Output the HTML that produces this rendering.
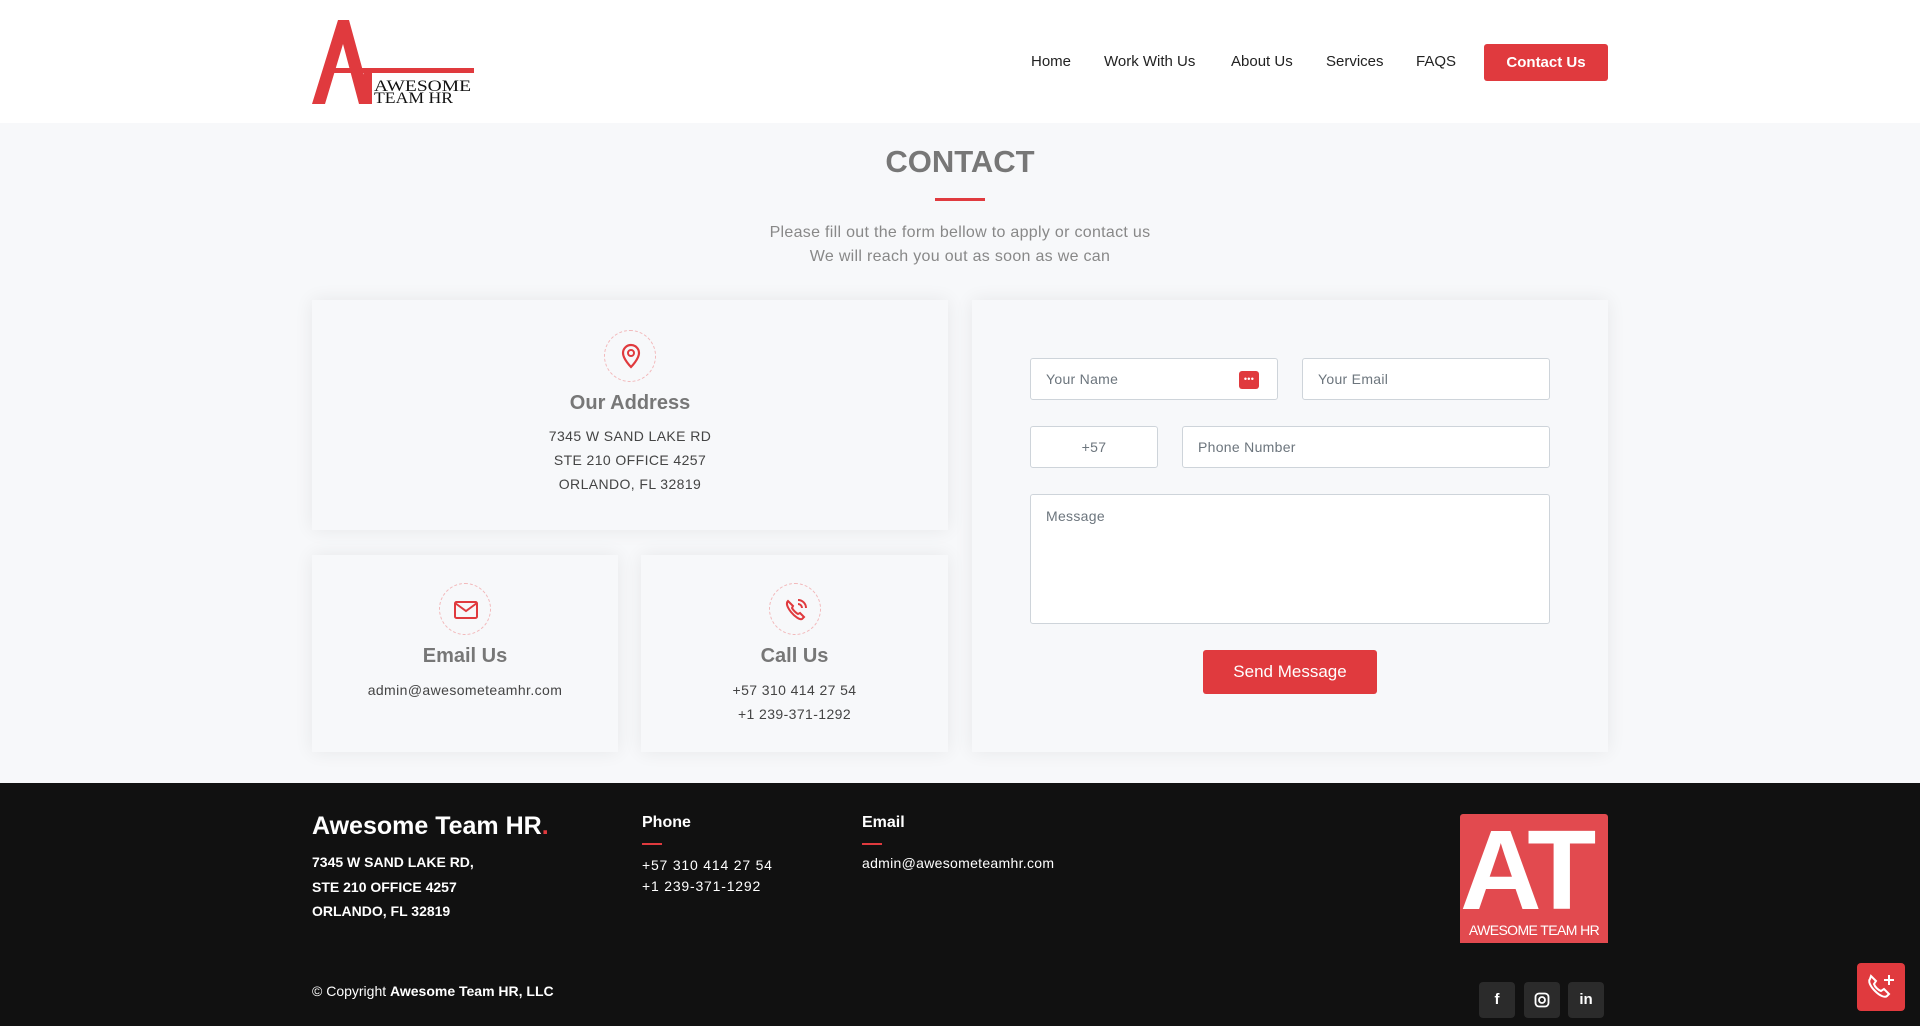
<!DOCTYPE html>
<html><head><meta charset="utf-8"><style>
*{box-sizing:border-box;margin:0;padding:0}
body{width:1920px;height:1026px;overflow:hidden;background:#f7f8fa;font-family:"Liberation Sans",sans-serif;position:relative;color:#444}
.abs{position:absolute}
header{position:absolute;left:0;top:0;width:1920px;height:123px;background:#fff}
.nav a{position:absolute;top:53px;font-size:15px;color:#222;text-decoration:none}
.cbtn{position:absolute;left:1484px;top:44px;width:124px;height:37px;background:#e03a3e;color:#fff;font-weight:bold;font-size:15px;border-radius:3px;text-align:center;line-height:37px}
h1{position:absolute;left:0;width:1920px;top:144px;text-align:center;font-size:31px;color:#777;font-weight:bold}
.sub{position:absolute;left:0;width:1920px;text-align:center;font-size:16px;color:#888;letter-spacing:.3px}
.card{position:absolute;background:#f7f8fa;box-shadow:0 0 18px rgba(0,0,0,.07);text-align:center}
.ic{position:absolute;width:52px;height:52px;border:1px dashed #f2b8ba;border-radius:50%;left:50%;margin-left:-26px}
.ct{position:absolute;width:100%;font-size:20px;font-weight:bold;color:#777}
.cl{position:absolute;width:100%;font-size:14px;color:#444;letter-spacing:.4px}
.inp{position:absolute;background:#fff;border:1px solid #ced4da;border-radius:3px;font-size:14px;color:#6c757d;padding-left:15px;line-height:40px;letter-spacing:.3px;text-align:left}
footer{position:absolute;left:0;top:783px;width:1920px;height:243px;background:#111}
.fw{color:#fff;position:absolute}
.soc{position:absolute;top:982px;width:36px;height:36px;background:#2b2b2b;border-radius:4px;color:#fff;font-weight:bold;font-size:15px;text-align:center;line-height:36px}
</style></head><body>
<header>
<svg class="abs" style="left:312px;top:20px" width="162" height="86" viewBox="0 0 162 86">
<polygon points="26,0 37,0 60,84 47,84 31,24 13,84 0,84" fill="#e03a3e"/>
<rect x="14" y="48" width="148" height="5" fill="#e03a3e"/>
<rect x="52" y="53" width="8" height="31" fill="#e03a3e"/>
<text x="62" y="71" font-family="Liberation Serif,serif" font-size="16" fill="#111" textLength="97" lengthAdjust="spacingAndGlyphs">AWESOME</text>
<text x="62" y="83" font-family="Liberation Serif,serif" font-size="16" fill="#111" textLength="79" lengthAdjust="spacingAndGlyphs">TEAM HR</text>
</svg>
<div class="nav"><a style="left:1031px">Home</a><a style="left:1104px">Work With Us</a><a style="left:1231px">About Us</a><a style="left:1326px">Services</a><a style="left:1416px">FAQS</a></div>
<div class="cbtn">Contact Us</div>
</header>
<h1>CONTACT</h1>
<div class="abs" style="left:935px;top:198px;width:50px;height:3px;background:#e03a3e"></div>
<div class="sub" style="top:224px">Please fill out the form bellow to apply or contact us</div>
<div class="sub" style="top:248px">We will reach you out as soon as we can</div>

<div class="card" style="left:312px;top:300px;width:636px;height:230px">
<div class="ic" style="top:30px"><svg width="52" height="52" viewBox="0 0 52 52"><path d="M26 14a8 8 0 0 0-8 8c0 6 8 14 8 14s8-8 8-14a8 8 0 0 0-8-8z" fill="none" stroke="#e03a3e" stroke-width="2.2"/><circle cx="26" cy="22" r="3" fill="none" stroke="#e03a3e" stroke-width="2"/></svg></div>
<div class="ct" style="top:92px">Our Address</div>
<div class="cl" style="top:128px">7345 W SAND LAKE RD</div>
<div class="cl" style="top:152px">STE 210 OFFICE 4257</div>
<div class="cl" style="top:176px">ORLANDO, FL 32819</div>
</div>
<div class="card" style="left:312px;top:555px;width:306px;height:197px">
<div class="ic" style="top:28px"><svg width="52" height="52" viewBox="0 0 52 52"><rect x="15" y="18" width="22" height="16" rx="1.5" fill="none" stroke="#e03a3e" stroke-width="2"/><path d="M15 19l11 8 11-8" fill="none" stroke="#e03a3e" stroke-width="2"/></svg></div>
<div class="ct" style="top:90px">Email Us</div>
<div class="cl" style="top:127px">admin@awesometeamhr.com</div>
</div>
<div class="card" style="left:641px;top:555px;width:307px;height:197px">
<div class="ic" style="top:28px"><svg width="52" height="52" viewBox="0 0 52 52"><path d="M18 17c-2 2-1 6 3 11s9 8 11 7l2-2-4-4-2 1c-2-1-5-4-6-6l1-2-4-4z" fill="none" stroke="#e03a3e" stroke-width="2"/><path d="M28 16a8 8 0 0 1 8 8M28 20a4 4 0 0 1 4 4" fill="none" stroke="#e03a3e" stroke-width="2"/></svg></div>
<div class="ct" style="top:90px">Call Us</div>
<div class="cl" style="top:127px">+57 310 414 27 54</div>
<div class="cl" style="top:151px">+1 239-371-1292</div>
</div>
<div class="card" style="left:972px;top:300px;width:636px;height:452px">
<div class="inp" style="left:58px;top:58px;width:248px;height:42px">Your Name<span style="position:absolute;right:18px;top:12px;width:20px;height:18px;background:#e03a3e;border-radius:3px;color:#fff;font-size:9px;line-height:17px;text-align:center">•••</span></div>
<div class="inp" style="left:330px;top:58px;width:248px;height:42px">Your Email</div>
<div class="inp" style="left:58px;top:126px;width:128px;height:42px;text-align:center;padding:0">+57</div>
<div class="inp" style="left:210px;top:126px;width:368px;height:42px">Phone Number</div>
<div class="inp" style="left:58px;top:194px;width:520px;height:130px;line-height:22px;padding-top:10px">Message</div>
<div class="abs" style="left:231px;top:350px;width:174px;height:44px;background:#e03a3e;border-radius:3px;color:#fff;font-size:17px;text-align:center;line-height:44px">Send Message</div>
</div>

<footer></footer>
<div class="fw" style="left:312px;top:812px;font-size:25px;font-weight:bold">Awesome Team HR<span style="color:#e03a3e">.</span></div>
<div class="fw" style="left:312px;top:850px;font-size:14px;font-weight:bold;line-height:24.5px">7345 W SAND LAKE RD,<br>STE 210 OFFICE 4257<br>ORLANDO, FL 32819</div>
<div class="fw" style="left:642px;top:814px;font-size:16px;font-weight:bold">Phone</div>
<div class="abs" style="left:642px;top:843px;width:20px;height:2px;background:#e03a3e"></div>
<div class="fw" style="left:642px;top:855px;font-size:14px;line-height:21px;letter-spacing:.8px">+57 310 414 27 54<br>+1 239-371-1292</div>
<div class="fw" style="left:862px;top:814px;font-size:16px;font-weight:bold">Email</div>
<div class="abs" style="left:862px;top:843px;width:20px;height:2px;background:#e03a3e"></div>
<div class="fw" style="left:862px;top:855px;font-size:14px;letter-spacing:.3px">admin@awesometeamhr.com</div>
<div class="abs" style="left:1460px;top:814px;width:148px;height:129px;background:#e24a4f;border-radius:3px 3px 0 0;overflow:hidden">
<div style="position:absolute;left:0;top:0;width:170px;font-size:113px;font-weight:bold;color:#fff;letter-spacing:-6px;line-height:1;white-space:nowrap">AT</div>
<div style="position:absolute;left:0;top:108px;width:148px;font-size:14px;color:#fff;text-align:center;letter-spacing:-.6px">AWESOME TEAM HR</div></div>
<div class="fw" style="left:312px;top:983px;font-size:14px">© Copyright <b>Awesome Team HR, LLC</b></div>
<div class="soc" style="left:1479px">f</div>
<div class="soc" style="left:1524px"><svg width="16" height="16" viewBox="0 0 16 16" style="margin-top:10px"><rect x="1.5" y="1.5" width="13" height="13" rx="3.5" fill="none" stroke="#fff" stroke-width="1.8"/><circle cx="8" cy="8" r="3" fill="none" stroke="#fff" stroke-width="1.8"/></svg></div>
<div class="soc" style="left:1568px">in</div>
<div class="abs" style="left:1857px;top:963px;width:48px;height:48px;background:#e03a3e;border-radius:4px"><svg width="48" height="48" viewBox="0 0 48 48"><path d="M13 16c-2 2 0 7 5 12s10 7 12 5l2-2-5-5-3 2c-3-1-6-4-7-7l2-3-5-5z" fill="none" stroke="#fff" stroke-width="2"/><path d="M32 12v10M27 17h10" stroke="#fff" stroke-width="2"/></svg></div>
</body></html>
